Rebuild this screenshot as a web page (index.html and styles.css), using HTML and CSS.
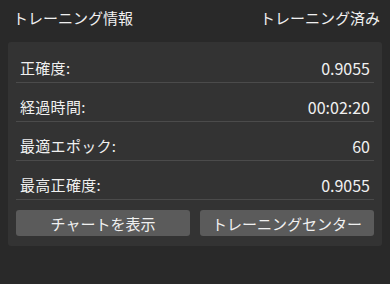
FILE: index.html
```html
<!DOCTYPE html>
<html lang="ja">
<head>
    <meta charset="UTF-8">
    <meta name="viewport" content="width=device-width, initial-scale=1.0">
    <title>トレーニング情報</title>
    <link rel="stylesheet" href="styles.css">
</head>
<body>
    <div class="header">
        <span class="title">トレーニング情報</span>
        <span class="status">トレーニング済み</span>
    </div>
    <div class="panel">
        <div class="row">
            <span class="label">正確度:</span>
            <span class="value">0.9055</span>
        </div>
        <div class="row">
            <span class="label">経過時間:</span>
            <span class="value">00:02:20</span>
        </div>
        <div class="row">
            <span class="label">最適エポック:</span>
            <span class="value">60</span>
        </div>
        <div class="row">
            <span class="label">最高正確度:</span>
            <span class="value">0.9055</span>
        </div>
        <div class="buttons">
            <button class="btn">チャートを表示</button>
            <button class="btn">トレーニングセンター</button>
        </div>
    </div>
</body>
</html>
```

FILE: styles.css
```css
body {
    font-family: "Noto Sans CJK JP", "Noto Sans", sans-serif;
    background-color: #292929;
    color: #f0f0f0;
    margin: 0;
    padding: 0 8px;
    font-size: 15px;
}
.header {
    display: flex;
    justify-content: space-between;
    align-items: center;
    height: 34px;
    padding: 0 2px 0 5px;
    margin-bottom: 8px;
}
.panel {
    background: #333333;
    border-radius: 3px;
    padding: 2px 8px 10px;
}
.row {
    display: flex;
    justify-content: space-between;
    align-items: center;
    line-height: 20px;
    padding: 14px 4px 4px 4px;
    border-bottom: 1px solid #4b4b4b;
}
.label {
    letter-spacing: 0.3px;
}
.value {
    font-size: 16px;
}
.buttons {
    display: flex;
    gap: 10px;
    margin-top: 10px;
}
.btn {
    flex: 1;
    height: 26px;
    background: #5b5b5b;
    border: none;
    border-radius: 3px;
    color: #f0f0f0;
    font-family: inherit;
    font-size: 15px;
    padding: 0;
    cursor: pointer;
}
```
